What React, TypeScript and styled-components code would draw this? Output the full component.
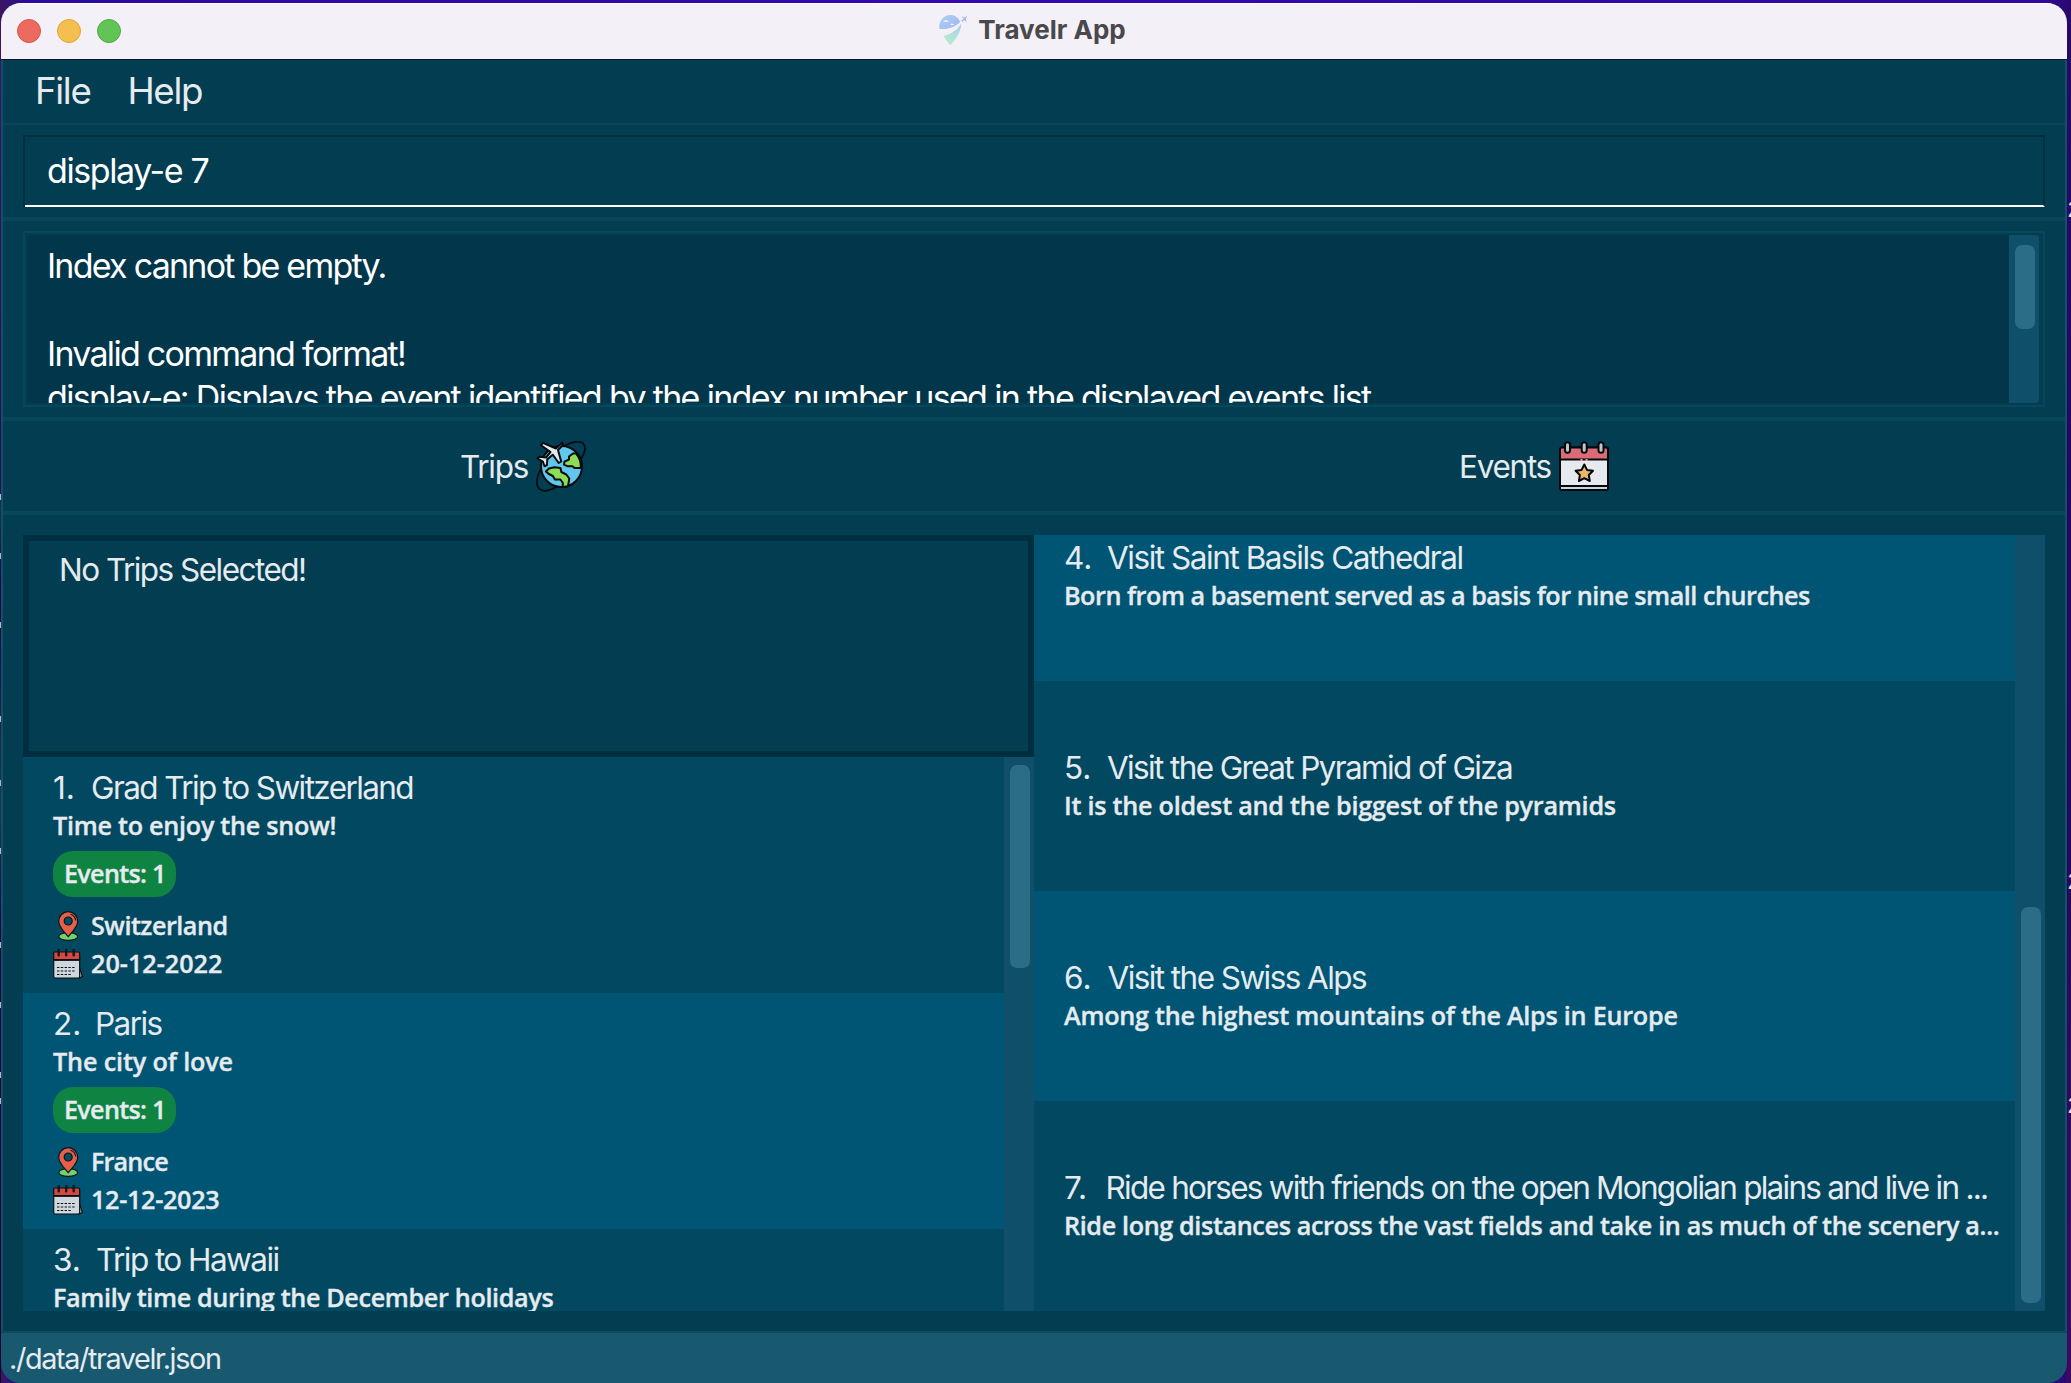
import React from "react";
import styled, { createGlobalStyle } from "styled-components";

const color = {
  base: "#033d52",
  line: "#07475c",
  dark: "#002e41",
  result: "#02364b",
  rowOdd: "#024861",
  rowEven: "#005474",
  track: "#104f69",
  thumb: "#2b6c86",
  footer: "#185970",
  text: "#e5ebee",
  tag: "#0f8341",
};

const GlobalStyle = createGlobalStyle`
  * { box-sizing: border-box; }
  body { margin: 0; background: #1d0442; }
`;

const Desktop = styled.div`
  position: relative;
  width: 2071px;
  height: 1383px;
  padding: 3px 4px 0 1px;
  overflow: hidden;
  background: linear-gradient(90deg, #3a1763 0, #2a0a9c 30px, #3707b0 50%, #2f0a9d 2040px, #2a0768 2071px);
`;

const DesktopEdge = styled.div<{ $side: "left" | "right" }>`
  position: absolute;
  top: 30px;
  bottom: 0;
  ${(p) => (p.$side === "left" ? "left: 0; width: 1px;" : "right: 0; width: 5px;")}
  background: ${(p) =>
    p.$side === "left"
      ? "linear-gradient(#3c1560 0, #2c0a4e 460px, #163549 480px, #1d0442 560px, #1a3a4e 780px, #1d0442 900px, #14022c 100%)"
      : "linear-gradient(#2a0768, #25055c 55%, #3c0a60)"};
`;

const EdgeMark = styled.span<{ $top: number; $side: "left" | "right" }>`
  position: absolute;
  top: ${(p) => p.$top}px;
  ${(p) =>
    p.$side === "left"
      ? "left: 0; width: 1px; height: 6px; background: #b9b4bd;"
      : "left: 2067px; width: 20px; height: 24px;"}
  color: #d6d3da;
  font: 400 24px/24px "Liberation Mono", monospace;
`;

const Window = styled.main`
  position: relative;
  display: flex;
  flex-direction: column;
  height: 1380px;
  border-radius: 20px;
  overflow: hidden;
  background: ${color.base};
  color: ${color.text};
  font-family: Inter, "Liberation Sans", sans-serif;
  white-space: nowrap;
`;

const TitleBar = styled.header`
  display: flex;
  align-items: center;
  height: 57px;
  padding: 0 19px 2px 16px;
  border-top: 1px solid #fff;
  border-bottom: 1px solid #02192a;
  background: #f3f0f7;
`;

const Lights = styled.div`
  display: flex;
  flex: 1;
  gap: 16px;
`;

const Light = styled.i<{ $fill: string; $ring: string }>`
  width: 24px;
  height: 24px;
  border: 1px solid ${(p) => p.$ring};
  border-radius: 50%;
  background: ${(p) => p.$fill};
`;

const Title = styled.h1`
  display: flex;
  align-items: center;
  gap: 9px;
  margin: 0;
  padding-bottom: 2px;
  color: #49484b;
  font-size: 26px;
  line-height: 34px;
  font-weight: 700;
`;

const Filler = styled.div`
  flex: 1;
`;

const Body = styled.div`
  display: flex;
  flex-direction: column;
  flex: 1;
  min-height: 0;
  border: solid #10506a;
  border-width: 0 2px;
`;

const MenuBar = styled.nav`
  display: flex;
  gap: 37px;
  height: 65px;
  padding: 0 32px;
  border-bottom: 2px solid ${color.line};
  font-size: 36.7px;
  line-height: 61px;
  letter-spacing: -1.35px;
`;

const Section = styled.section`
  padding: 10px 20px;
  border-bottom: 4px solid ${color.line};
`;

const CommandFrame = styled.div`
  border-left: 2px solid ${color.dark};
`;

const CommandBox = styled.div`
  height: 72px;
  padding: 0 22px;
  border: 2px solid ${color.dark};
  border-left: 0;
  border-bottom-color: #fff;
  color: #fff;
  font-size: 34px;
  line-height: 68px;
  letter-spacing: -1.4px;
`;

const ResultBox = styled.div`
  height: 176px;
  border: 2px solid ${color.line};
  padding: 2px 4px 2px 2px;
`;

const ResultView = styled.div`
  display: flex;
  height: 168px;
  border-radius: 4px;
  overflow: hidden;
  background: ${color.result};
`;

const ResultText = styled.div`
  flex: 1;
  padding: 9px 20px 0;
  color: #fff;
  font-size: 34px;
  line-height: 44px;
`;

const ResultLine = styled.p<{ $tracking: number }>`
  height: 44px;
  margin: 0;
  letter-spacing: ${(p) => p.$tracking}px;
`;

const Track = styled.div<{ $align?: "start" | "end"; $inset?: number }>`
  display: flex;
  flex-direction: column;
  justify-content: flex-${(p) => p.$align ?? "start"};
  flex: none;
  width: 30px;
  padding: ${(p) => p.$inset ?? 8}px 4px ${(p) => p.$inset ?? 8}px 6px;
  background: ${color.track};
`;

const Thumb = styled.div<{ $height: number }>`
  height: ${(p) => p.$height}px;
  border-radius: 7px;
  background: ${color.thumb};
`;

const Headings = styled.div`
  display: grid;
  grid-template-columns: 1fr 1fr;
  height: 94px;
  padding: 0 20px;
  border-bottom: 4px solid ${color.line};
`;

const Heading = styled.h2`
  display: flex;
  align-items: center;
  justify-content: center;
  gap: 8px;
  margin: 0;
  padding-right: 11px;
  font-size: 31.5px;
  line-height: 38px;
  font-weight: 400;
  letter-spacing: -1.3px;

  svg { flex: none; }
  span { padding-top: 2px; }
`;

const Panels = styled.div`
  display: grid;
  grid-template-columns: 1fr 1fr;
  height: 796px;
  padding: 20px 20px 0;
`;

const Column = styled.div`
  display: flex;
  flex-direction: column;
  min-width: 0;
  min-height: 0;
`;

const Selection = styled.div`
  height: 222px;
  padding: 10px 30px;
  border: 6px solid ${color.dark};
  font-size: 31.5px;
  line-height: 38px;
  letter-spacing: -1.53px;
`;

const ListArea = styled.div`
  display: flex;
  flex: 1;
  min-height: 0;
`;

const List = styled.ul<{ $bottom?: boolean }>`
  display: flex;
  flex-direction: column;
  justify-content: ${(p) => (p.$bottom ? "flex-end" : "flex-start")};
  flex: 1;
  min-width: 0;
  margin: 0;
  padding: 0;
  overflow: hidden;
  list-style: none;
`;

const TripRow = styled.li<{ $even?: boolean }>`
  flex: none;
  height: 236px;
  padding: 12px 30px 0;
  background: ${(p) => (p.$even ? color.rowEven : color.rowOdd)};
`;

const EventRow = styled(TripRow)`
  display: flex;
  flex-direction: column;
  justify-content: center;
  height: 210px;
  padding: 0 0 0 30px;
`;

const Name = styled.div<{ $tracking: number }>`
  display: flex;
  font-size: 31.5px;
  line-height: 38px;
  letter-spacing: ${(p) => p.$tracking}px;
`;

const Index = styled.span<{ $width: number }>`
  flex: none;
  width: ${(p) => p.$width}px;
  letter-spacing: 0;
`;

const Detail = styled.div<{ $tracking: number }>`
  font-family: "Open Sans", "Noto Sans", sans-serif;
  font-size: 25.2px;
  font-weight: 600;
  line-height: 36px;
  letter-spacing: ${(p) => p.$tracking}px;
  -webkit-text-stroke: 0.35px currentColor;
`;

const Tag = styled(Detail)`
  width: 123px;
  height: 46px;
  margin: 8px 0 9px;
  padding-left: 11px;
  border-radius: 20px;
  background: ${color.tag};
  line-height: 44px;
`;

const Fact = styled(Detail)`
  display: flex;
  align-items: center;
  gap: 8px;
  height: 38px;

  svg { margin-top: 2px; }
`;

const Footer = styled.footer`
  height: 52px;
  padding-left: 8px;
  border-top: 2px solid #0c4a60;
  background: ${color.footer};
  font-size: 28.8px;
  line-height: 51px;
  letter-spacing: -1.38px;
`;

const AppLogo = () => (
  <svg width="30" height="32" viewBox="0 0 30 32">
    <defs>
      <linearGradient id="dome" x1="0" y1="0" x2="1" y2="1">
        <stop offset="0" stopColor="#a9d3f2" />
        <stop offset="1" stopColor="#a6b3ee" />
      </linearGradient>
      <linearGradient id="tail" x1="1" y1="0" x2="0.3" y2="1">
        <stop offset="0" stopColor="#a9cfe6" />
        <stop offset="1" stopColor="#b5ecd0" />
      </linearGradient>
    </defs>
    <path d="M.4 14.8C-.7 7.200 4.500 1 11.200 1c4.600 0 8.500 2.700 9.900 7C15.500 13.500 8.500 15.800.4 14.800Z" fill="url(#dome)" />
    <path d="M22.400 9.500C22 16.500 18 24.500 11.300 31.500 9 28.700 6.600 25.600 4.600 22c7.300-1.600 13.500-6 17.800-12.500Z" fill="url(#tail)" />
    <path d="M4.300 7.800l1.500-1.500 1.700-.4 1.300 1 2.200.9ZM11 10.800l1.700-1.400 1.500.6 1 .8-1.700.4Z" fill="#f3f0f7" />
    <path d="M28.500 1.200l-2.500 2.200-3.800-1.100 2.600 2.300-1.500 1.500-1.600-.1 1.300 1 .7 1.400.3-1.500 1.600-1.200 1.800 2.800-.4-4Z" fill="#9db9e4" />
  </svg>
);

const GlobeIcon = () => (
  <svg width="50" height="51" viewBox="0 0 50 51" stroke="#050b0e" strokeWidth="2" strokeLinejoin="round" strokeLinecap="round">
    <path d="M28 5C37-.2 45.500-.6 48 3.500c2.400 4.200.4 9.800-4.500 16.500M5 28C.2 35.500-.6 44.500 3.500 48c4.500 3.500 12.500.8 19-3.500" fill="none" strokeWidth="1.800" />
    <circle cx="25.500" cy="25.500" r="20.500" fill="#62c7ed" />
    <path d="M37 12.500l-4 3v3l-4.500 2.200-.5 3 3.500 1.500h5l2 1.800h6.300c.4-5.500-1.300-10.500-4.600-14.500Z" fill="#8fdc57" />
    <path d="M13 27.500l5.500-1.300 6 .8.8 4 5 2.500 3 4-1.300 7.800-5.500.7.400-4-2.500-3.500h-5.500l-2-3.500-4-2-3-2.500Z" fill="#8fdc57" />
    <path d="M26 1.500l-6.500 6L6.300 1.800 4.500 4.300 14 11 9.500 16.500 2.500 15.800 1 17.500l5.500 3.200 1.500 4.600 2.500-1.300.2-5.500 5.500-4.800 6 8.300 2.500-1.500-3.200-11.500L26.500 4Z" fill="#e3eaee" transform="translate(.5 0)" />
  </svg>
);

const EventIcon = () => (
  <svg width="50" height="51" viewBox="0 0 50 51" stroke="#04090c" strokeWidth="2" strokeLinejoin="round">
    <path d="M3 6.500h44a2 2 0 0 1 2 2V47a2 2 0 0 1-2 2H3a2 2 0 0 1-2-2V8.500a2 2 0 0 1 2-2Z" fill="#e6eaee" />
    <path d="M1 18.500v-10a2 2 0 0 1 2-2h44a2 2 0 0 1 2 2v10Z" fill="#dd6b76" />
    <path d="M2 46h46v2H2Z" fill="#c9d5dc" stroke="none" />
    <path d="M1 45h48" />
    <path d="M21.500 19h2m3 0h2" stroke="#f49aa2" />
    {[8.500, 25.200, 42].map((x) => (
      <rect key={x} x={x - 2.500} y="1.200" width="5" height="10.500" rx="2.500" fill="#b9c8d1" />
    ))}
    <path d="M25.300 23.500l2.700 5.400 6 .9-4.200 4.200 1 6-5.500-2.800-5.400 2.800 1-6-4.300-4.200 6-.9Z" fill="#ebb867" />
  </svg>
);

const PinIcon = () => (
  <svg width="30" height="30" viewBox="0 0 30 30" stroke="#07161c" strokeWidth="1.200">
    <ellipse cx="15.200" cy="25.500" rx="9.400" ry="3.900" fill="#72d36c" />
    <path d="M15.200.7a9.500 9.500 0 0 1 9.500 9.500c0 6-5.500 10.500-9.500 15.500-4-5-9.500-9.500-9.500-15.500A9.500 9.500 0 0 1 15.200.7Z" fill="#e65f47" />
    <circle cx="15.200" cy="10" r="4" fill="#034c66" />
    <path d="M17.500 3.300c3 1 4.800 3.200 5.200 6" fill="none" />
  </svg>
);

const DateIcon = () => (
  <svg width="30" height="30" viewBox="0 0 30 30" stroke="#081015" strokeWidth="1.200" strokeLinejoin="round">
    <path d="M26 17l3.400 10.500-3.400 1.500Z" fill="#aebbc2" />
    <path d="M.7 10h26v17.500a1.500 1.500 0 0 1-1.500 1.500h-23A1.500 1.500 0 0 1 .7 27.500Z" fill="#d0d8dd" />
    <path d="M.7 10.500V4.300c0-.8.500-1.300 1.300-1.300h23.400c.8 0 1.300.5 1.300 1.300v6.200Z" fill="#d8473f" />
    <path d="M.7 11h26" strokeWidth="1.800" />
    <path d="M5.700.8v5.500M13.200.8v5.500M20.700.8v5.500" strokeWidth="2.400" strokeLinecap="round" stroke="#0a1a21" />
    <path d="M4 18.500h19M4 22h18M4 25.500h15" strokeDasharray="2.400 1.400" fill="none" />
  </svg>
);

const trips = [
  { n: 1, name: "Grad Trip to Switzerland", gap: 38, tracking: -1.6, about: "Time to enjoy the snow!", aboutTracking: -0.27, place: "Switzerland", placeTracking: -0.5, date: "20-12-2022", dateTracking: 0 },
  { n: 2, name: "Paris", gap: 42, tracking: -1.55, about: "The city of love", aboutTracking: -0.14, place: "France", placeTracking: -0.85, date: "12-12-2023", dateTracking: -0.3 },
  { n: 3, name: "Trip to Hawaii", gap: 43, tracking: -1.55, about: "Family time during the December holidays", aboutTracking: -0.35, place: "Hawaii", placeTracking: -0.6, date: "10-12-2022", dateTracking: 0 },
];

const events = [
  { n: 4, name: "Visit Saint Basils Cathedral", gap: 43, tracking: -1.45, about: "Born from a basement served as a basis for nine small churches", aboutTracking: -0.48 },
  { n: 5, name: "Visit the Great Pyramid of Giza", gap: 43, tracking: -1.63, about: "It is the oldest and the biggest of the pyramids", aboutTracking: -0.25 },
  { n: 6, name: "Visit the Swiss Alps", gap: 43.5, tracking: -1.57, about: "Among the highest mountains of the Alps in Europe", aboutTracking: -0.25 },
  { n: 7, name: "Ride horses with friends on the open Mongolian plains and live in ...", gap: 41.5, tracking: -1.75, about: "Ride long distances across the vast fields and take in as much of the scenery a...", aboutTracking: -0.37 },
];

export default function App() {
  return (
    <Desktop>
      <GlobalStyle />
      <DesktopEdge $side="left" />
      <DesktopEdge $side="right" />
      {[494, 553, 622, 716, 780, 848, 942, 1002, 1072, 1098].map((y) => (
        <EdgeMark key={y} $side="left" $top={y} />
      ))}
      {[199, 871, 1095].map((y) => (
        <EdgeMark key={y} $side="right" $top={y}>2</EdgeMark>
      ))}
      <Window>
        <TitleBar>
          <Lights>
            <Light $fill="#ed6a5f" $ring="#d85548" />
            <Light $fill="#f5bf4f" $ring="#dba53a" />
            <Light $fill="#61c454" $ring="#4eaa43" />
          </Lights>
          <Title>
            <AppLogo />
            Travelr App
          </Title>
          <Filler />
        </TitleBar>
        <Body>
          <MenuBar>
            <span>File</span>
            <span>Help</span>
          </MenuBar>
          <Section>
            <CommandFrame>
              <CommandBox>display-e 7</CommandBox>
            </CommandFrame>
          </Section>
          <Section>
            <ResultBox>
              <ResultView>
                <ResultText>
                  <ResultLine $tracking={-1.76}>Index cannot be empty.</ResultLine>
                  <ResultLine $tracking={0} />
                  <ResultLine $tracking={-1.72}>Invalid command format!</ResultLine>
                  <ResultLine $tracking={-1.67}>
                    display-e: Displays the event identified by the index number used in the displayed events list
                  </ResultLine>
                </ResultText>
                <Track $inset={10}>
                  <Thumb $height={84} />
                </Track>
              </ResultView>
            </ResultBox>
          </Section>
          <Headings>
            <Heading>
              <span>Trips</span>
              <GlobeIcon />
            </Heading>
            <Heading>
              <span>Events</span>
              <EventIcon />
            </Heading>
          </Headings>
          <Panels>
            <Column>
              <Selection>No Trips Selected!</Selection>
              <ListArea>
                <List>
                  {trips.map((t) => (
                    <TripRow key={t.n} $even={t.n % 2 === 0}>
                      <Name $tracking={t.tracking}>
                        <Index $width={t.gap}>{t.n}.</Index>
                        {t.name}
                      </Name>
                      <Detail $tracking={t.aboutTracking}>{t.about}</Detail>
                      {t.n < 3 && (
                        <>
                          <Tag $tracking={-0.7}>Events: 1</Tag>
                          <Fact $tracking={t.placeTracking}>
                            <PinIcon />
                            {t.place}
                          </Fact>
                          <Fact $tracking={t.dateTracking}>
                            <DateIcon />
                            {t.date}
                          </Fact>
                        </>
                      )}
                    </TripRow>
                  ))}
                </List>
                <Track>
                  <Thumb $height={203} />
                </Track>
              </ListArea>
            </Column>
            <Column>
              <ListArea>
                <List $bottom>
                  {events.map((e) => (
                    <EventRow key={e.n} $even={e.n % 2 === 0}>
                      <Name $tracking={e.tracking}>
                        <Index $width={e.gap}>{e.n}.</Index>
                        {e.name}
                      </Name>
                      <Detail $tracking={e.aboutTracking}>{e.about}</Detail>
                    </EventRow>
                  ))}
                </List>
                <Track $align="end">
                  <Thumb $height={396} />
                </Track>
              </ListArea>
            </Column>
          </Panels>
          <Filler />
        </Body>
        <Footer>./data/travelr.json</Footer>
      </Window>
    </Desktop>
  );
}
